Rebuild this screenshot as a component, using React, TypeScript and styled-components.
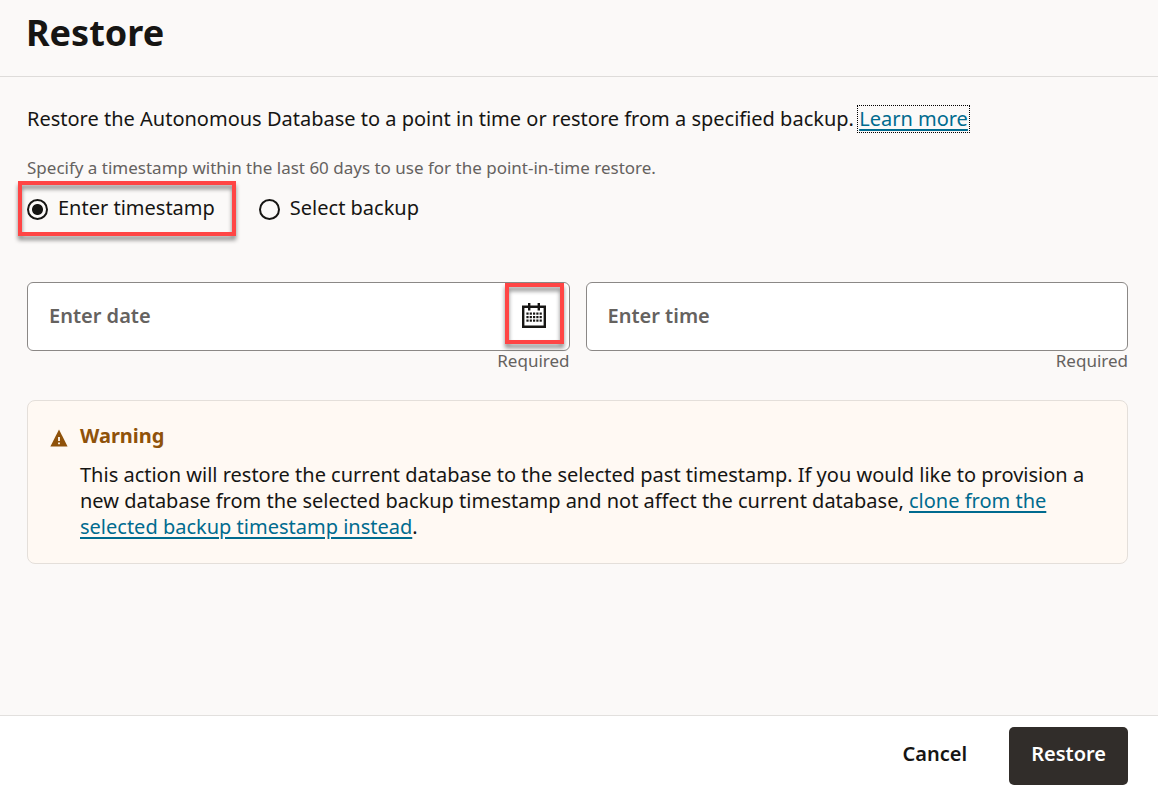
import React, { useState } from "react";
import styled, { createGlobalStyle, css } from "styled-components";

const ink = "#161513";
const muted = "#65625f";
const link = "#006b8f";
const brown = "#8f520a";
const marker = "#ff4545";

const GlobalStyle = createGlobalStyle`
  *, *::before, *::after { box-sizing: border-box; }
  body {
    margin: 0;
    background: #fbf9f8;
    color: ${ink};
    font-family: "Noto Sans", "Open Sans", sans-serif;
    font-size: 20px;
    line-height: 26px;
  }
  button, input { font: inherit; color: inherit; }
`;

const Page = styled.div`
  display: flex;
  flex-direction: column;
  min-height: 100vh;
`;

const Header = styled.header`
  padding: 8px 26px 18px;
  border-bottom: 1px solid #dedcda;
`;

const Title = styled.h1`
  margin: 0;
  font-size: 36px;
  line-height: 50px;
  font-weight: 700;
`;

const Main = styled.main`
  flex: 1;
  padding: 29px 30px 32px 27px;
`;

const Lead = styled.p`
  margin: 0;
`;

const Link = styled.a<{ $focused?: boolean }>`
  color: ${link};
  text-decoration: underline;
  text-decoration-thickness: 2px;
  text-underline-offset: 3px;
  ${(p) =>
    p.$focused &&
    css`
      display: inline-block;
      line-height: 24px;
      outline: 1px dotted #000;
      outline-offset: 1px;
    `}
`;

const Choices = styled.fieldset`
  display: flex;
  flex-wrap: wrap;
  gap: 44px;
  margin: 24px 0 0;
  padding: 0;
  border: 0;
`;

const Hint = styled.legend`
  margin: 0 0 15px;
  padding: 0;
  color: ${muted};
  font-size: 17px;
  line-height: 24px;
`;

const Choice = styled.label`
  position: relative;
  display: flex;
  align-items: center;
  gap: 10px;
`;

const Radio = styled.input`
  appearance: none;
  width: 21px;
  height: 21px;
  margin: 2px 0 0;
  border: 2px solid ${ink};
  border-radius: 50%;
  background: transparent;
  &:checked {
    background: radial-gradient(circle, ${ink} 5px, transparent 6px);
  }
`;

const Highlight = styled.span<{ $inset: string }>`
  position: absolute;
  inset: ${(p) => p.$inset};
  border: 4px solid ${marker};
  filter: drop-shadow(0 4px 2px rgba(0, 0, 0, 0.45));
  pointer-events: none;
`;

const Fields = styled.div`
  display: grid;
  grid-template-columns: 1fr 1fr;
  gap: 16px;
  margin-top: 61px;
`;

const FieldBox = styled.div`
  display: flex;
  align-items: center;
  height: 69px;
  border: 1px solid #8b8886;
  border-radius: 6px;
  background: #fff;
`;

const FieldInput = styled.input`
  flex: 1;
  min-width: 0;
  height: 100%;
  padding: 0 21px 2px;
  border: 0;
  border-radius: 6px;
  background: transparent;
  outline: 0;
  &::placeholder {
    color: ${muted};
    font-weight: 600;
    opacity: 1;
  }
`;

const IconButton = styled.button`
  position: relative;
  display: grid;
  place-items: center;
  width: 59px;
  height: 61px;
  margin-right: 5px;
  margin-bottom: 6px;
  padding: 4px 0 0;
  border: 0;
  background: transparent;
`;

const Required = styled.div`
  color: ${muted};
  font-size: 17px;
  line-height: 20px;
  text-align: right;
`;

const Notice = styled.section`
  display: grid;
  grid-template-columns: 18px 1fr;
  column-gap: 12px;
  margin-top: 29px;
  padding: 22px 22px 23px;
  border: 1px solid #e4dfda;
  border-radius: 8px;
  background: #fff9f3;
`;

const NoticeIcon = styled.svg`
  margin-top: 6px;
`;

const NoticeTitle = styled.h2`
  margin: 0 0 13px;
  color: ${brown};
  font-size: 20px;
  line-height: 26px;
  font-weight: 700;
`;

const NoticeText = styled.p`
  margin: 0;
`;

const Footer = styled.footer`
  display: flex;
  justify-content: flex-end;
  gap: 20px;
  padding: 11px 30px 10px;
  border-top: 1px solid #e2e0de;
  background: #fff;
`;

const Button = styled.button<{ $primary?: boolean }>`
  height: 58px;
  padding: 0 22px 4px;
  border: 0;
  border-radius: 5px;
  font-weight: 600;
  background: ${(p) => (p.$primary ? "#312d2a" : "transparent")};
  color: ${(p) => (p.$primary ? "#fff" : ink)};
`;

const dotColumns = [4.4, 7.7, 11, 14.3, 17.6];
const dotRows = [9.5, 13, 16.5];

function CalendarIcon() {
  return (
    <svg width="24" height="25" viewBox="0 0 24 25" fill={ink} aria-hidden="true">
      <path d="M6 0h2.4v2.6h7.2V0H18v2.6h6V25H0V2.6h6zM2.4 5v17.6h19.2V5H18v2.4h-2.4V5H8.4v2.4H6V5z" />
      {dotRows.map((y) =>
        dotColumns.map((x) => <rect key={`${x}-${y}`} x={x} y={y} width="2.2" height="2.2" />)
      )}
    </svg>
  );
}

function WarningIcon() {
  return (
    <NoticeIcon width="18" height="18" viewBox="0 0 18 18" aria-hidden="true">
      <path d="M9 0.5L17.6 17.5H0.4z" fill={brown} />
      <path d="M8.1 8h1.8v4H8.1zM8.1 13.4h1.8v1.8H8.1z" fill="#fff9f3" />
    </NoticeIcon>
  );
}

export default function App() {
  const [mode, setMode] = useState("timestamp");
  return (
    <>
      <GlobalStyle />
      <Page>
        <Header>
          <Title>Restore</Title>
        </Header>
        <Main>
          <Lead>
            Restore the Autonomous Database to a point in time or restore from a specified backup.{" "}
            <Link href="#learn" $focused>Learn more</Link>
          </Lead>
          <Choices>
            <Hint>Specify a timestamp within the last 60 days to use for the point-in-time restore.</Hint>
            <Choice>
              <Radio type="radio" name="mode" checked={mode === "timestamp"} onChange={() => setMode("timestamp")} />
              Enter timestamp
              <Highlight $inset="-14px -21px -15px -9px" />
            </Choice>
            <Choice>
              <Radio type="radio" name="mode" checked={mode === "backup"} onChange={() => setMode("backup")} />
              Select backup
            </Choice>
          </Choices>
          <Fields>
            <div>
              <FieldBox>
                <FieldInput aria-label="Enter date" placeholder="Enter date" required />
                <IconButton type="button" aria-label="Choose date">
                  <CalendarIcon />
                  <Highlight $inset="0" />
                </IconButton>
              </FieldBox>
              <Required>Required</Required>
            </div>
            <div>
              <FieldBox>
                <FieldInput aria-label="Enter time" placeholder="Enter time" required />
              </FieldBox>
              <Required>Required</Required>
            </div>
          </Fields>
          <Notice>
            <WarningIcon />
            <div>
              <NoticeTitle>Warning</NoticeTitle>
              <NoticeText>
                This action will restore the current database to the selected past timestamp. If you would like to
                provision a new database from the selected backup timestamp and not affect the current database,{" "}
                <Link href="#clone">clone from the selected backup timestamp instead</Link>.
              </NoticeText>
            </div>
          </Notice>
        </Main>
        <Footer>
          <Button type="button">Cancel</Button>
          <Button type="button" $primary>Restore</Button>
        </Footer>
      </Page>
    </>
  );
}
